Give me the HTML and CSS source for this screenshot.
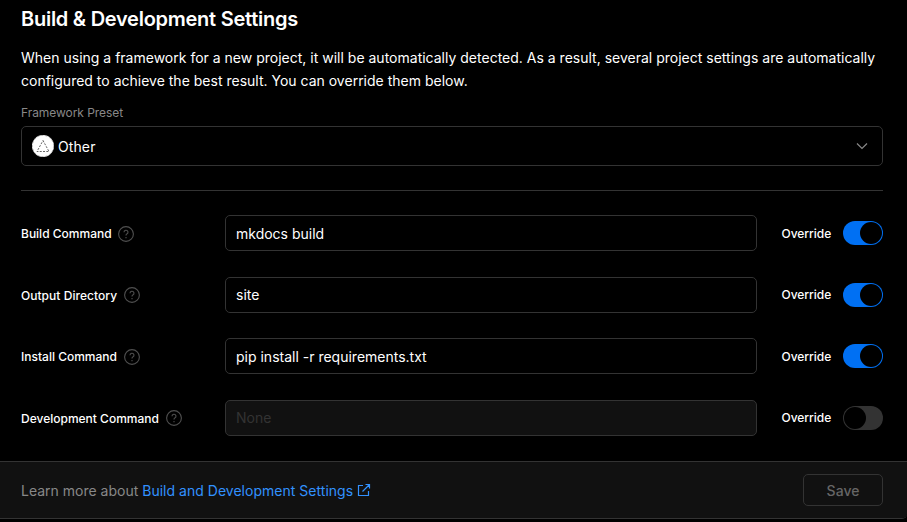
FILE: index.html
```html
<!DOCTYPE html>
<html lang="en">
<head>
<meta charset="utf-8">
<title>Build &amp; Development Settings</title>
<link rel="stylesheet" href="styles.css">
</head>
<body>
<main class="card">
<section class="content">
<h1>Build &amp; Development Settings</h1>
<p class="intro">When using a framework for a new project, it will be automatically detected. As a result, several project settings are automatically configured to achieve the best result. You can override them below.</p>
<div class="preset-label">Framework Preset</div>
<div class="select">
<svg class="logo" width="22" height="22" viewBox="0 0 22 22"><circle cx="11" cy="11" r="11" fill="#fff"/><circle cx="11" cy="11" r="10.6" fill="none" stroke="#888" stroke-width=".6" stroke-dasharray="2 2"/><path d="M11 5.5 17 16.5H5Z" fill="none" stroke="#555" stroke-width=".9" stroke-dasharray="2 1.3"/></svg>
<span>Other</span>
<svg class="chevron" width="14" height="14" viewBox="0 0 14 14"><path d="m2 4.5 5 5 5-5" fill="none" stroke="#888" stroke-width="1.2"/></svg>
</div>
<hr>
<div class="rows">
<div class="row"><div class="name">Build Command <svg class="help" viewBox="0 0 16 16"><circle cx="8" cy="8" r="7.4"/><path d="M6 6.3a2 2 0 1 1 2.8 1.8c-.6.3-.8.6-.8 1.3M8 11v1.2"/></svg></div><div class="input">mkdocs build</div><div class="override">Override</div><div class="toggle on"></div></div>
<div class="row"><div class="name wide">Output Directory <svg class="help high" viewBox="0 0 16 16"><circle cx="8" cy="8" r="7.4"/><path d="M6 6.3a2 2 0 1 1 2.8 1.8c-.6.3-.8.6-.8 1.3M8 11v1.2"/></svg></div><div class="input raised">site</div><div class="override raised">Override</div><div class="toggle on"></div></div>
<div class="row"><div class="name">Install Command <svg class="help" viewBox="0 0 16 16"><circle cx="8" cy="8" r="7.4"/><path d="M6 6.3a2 2 0 1 1 2.8 1.8c-.6.3-.8.6-.8 1.3M8 11v1.2"/></svg></div><div class="input">pip install -r requirements.txt</div><div class="override">Override</div><div class="toggle on"></div></div>
<div class="row"><div class="name">Development Command <svg class="help high" viewBox="0 0 16 16"><circle cx="8" cy="8" r="7.4"/><path d="M6 6.3a2 2 0 1 1 2.8 1.8c-.6.3-.8.6-.8 1.3M8 11v1.2"/></svg></div><div class="input disabled raised">None</div><div class="override raised">Override</div><div class="toggle"></div></div>
</div>
</section>
<footer><span class="learn">Learn more about <a>Build and Development Settings</a></span><svg class="external" width="14" height="14" viewBox="0 0 14 14"><path d="M6 2.5H1.5v10h10V8M8.5 1.5h4v4M12.5 1.5l-7 7"/></svg><button>Save</button></footer>
</main>
</body>
</html>
```
FILE: styles.css
```css
* { box-sizing: border-box; }
body { margin: 0; background: #000; color: #fff; font: 14px/20px Inter, sans-serif; overflow: hidden; }
.card { height: 519px; border-bottom: 1px solid #333; border-bottom-right-radius: 5px; overflow: hidden; display: flex; flex-direction: column; }
.content { height: 461px; padding: 3px 24px 0 21px; }
h1 { margin: 0; font-size: 20px; line-height: 32px; font-weight: 600; letter-spacing: -.26px; }
.intro { margin: 11px 0 0; font-size: 14px; line-height: 23px; letter-spacing: .004px; }
.preset-label { margin-top: 12px; font-size: 12px; line-height: 18px; letter-spacing: -.06px; color: #888; }
.select { height: 40px; margin-top: 4px; border: 1px solid #333; border-radius: 5px; display: flex; align-items: center; padding: 0 13px 0 10px; }
.select span { margin-left: 4px; padding-top: 2px; letter-spacing: .1px; }
.chevron { margin-left: auto; }
hr { margin: 24px 0; height: 1px; border: 0; background: #333; }
.rows { display: grid; row-gap: 25.7px; }
.row { height: 36px; display: grid; grid-template-columns: 204px 532px 86px 40px; align-items: center; }
.name { display: flex; align-items: center; gap: 7px; padding-top: 2px; font-size: 12px; font-weight: 500; white-space: nowrap; }
.name.wide { letter-spacing: .04px; }
.help { width: 16px; height: 16px; fill: none; stroke: #505050; stroke-width: 1.1; }
.help.high { margin-bottom: 2px; }
.row:first-child .name { gap: 6px; }
.input { height: 36px; border: 1px solid #333; border-radius: 5px; padding: 0 10px; line-height: 35px; }
.input.raised { line-height: 33px; }
.disabled { background: #111; color: #333; }
.override { padding: 2px 0 0 24.5px; font-size: 12px; font-weight: 500; letter-spacing: -.03px; }
.override.raised { padding-top: 0; }
.toggle { width: 40px; height: 24px; border-radius: 12px; background: #333; padding: 1px; display: flex; }
.toggle::before { content: ""; width: 22px; height: 22px; border-radius: 50%; background: #000; }
.on { background: #0070f3; justify-content: flex-end; }
footer { flex: 1; background: #111; border-top: 1px solid #333; display: flex; align-items: center; padding: 0 24px 0 21px; color: #888; }
.learn { padding-top: 2px; }
a { color: #3291ff; letter-spacing: .02px; }
.external { margin-left: 4px; fill: none; stroke: #3291ff; stroke-width: 1.2; }
button { margin-left: auto; width: 80px; height: 32px; border: 1px solid #333; border-radius: 5px; background: #111; color: #666; font: inherit; font-weight: 500; padding: 2px 0 0; }
```
